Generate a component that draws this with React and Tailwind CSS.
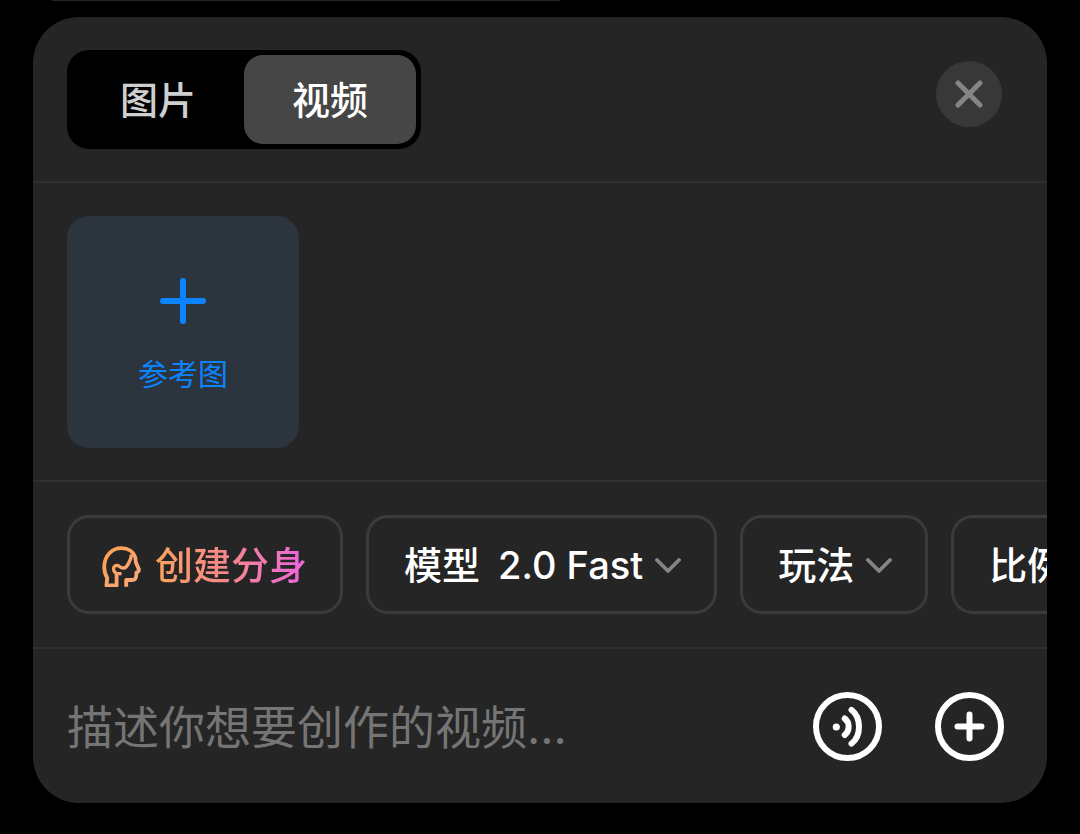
import React, { useState } from 'react';

const TABS = [
  { id: 'image', label: '图片' },
  { id: 'video', label: '视频' },
];

const AvatarIcon = () => (
  <svg width="42" height="42" viewBox="0 0 42 42" fill="none" stroke="url(#avatarStroke)" strokeWidth="3.8" strokeLinejoin="round" className="shrink-0" aria-hidden="true">
    <defs>
      <linearGradient id="avatarStroke" x1="0" y1="0" x2="1" y2="1">
        <stop offset="0" stopColor="#fba24e" />
        <stop offset="1" stopColor="#fba780" />
      </linearGradient>
    </defs>
    <path d="M15.6 28.4V40.4H5.4L6.2 33C4.2 29.8 3.2 26 3.2 21.5C3.6 10.5 10.8 3.2 20.5 3.2C27.2 3.2 32.4 6.6 34.2 12C34.8 14.2 34.4 16 35 17.8L37.6 23.6C38.2 25.4 37.6 26.8 35.4 27.6C35.6 32.6 34.4 35 30.8 35H25.2V41.8" />
    <path d="M20.6 28.6H15.6C12.8 26.8 11.6 24 13.2 21.6C14.8 19.8 17.2 20.2 18.8 21.8C21.2 23.8 24.6 23.4 26.2 20.6C27.6 17.6 30.6 15 30.4 9.4" strokeWidth="3.4" />
  </svg>
);

const Chevron = () => (
  <svg width="26" height="15" viewBox="0 0 26 15" fill="none" stroke="#858585" strokeWidth="3.8" strokeLinecap="round" strokeLinejoin="round" className="pointer-events-none shrink-0" aria-hidden="true">
    <path d="M2 2L13 13L24 2" />
  </svg>
);

const SelectChip = ({ name, label, options }) => (
  <label className="flex h-[99px] shrink-0 items-center rounded-[22px] border-3 border-[#3b3b3b] pl-[35px] pr-[33px] pt-0.5 text-[38px] font-medium text-white">
    {label && <span className="mr-[18px] whitespace-nowrap">{label}</span>}
    <select
      aria-label={name}
      className="mr-3 appearance-none bg-transparent font-medium outline-none field-sizing-content"
    >
      {options.map((option) => (
        <option key={option} className="bg-[#252525]">{option}</option>
      ))}
    </select>
    <Chevron />
  </label>
);

const App = () => {
  const [tab, setTab] = useState('video');
  const [prompt, setPrompt] = useState('');

  return (
    <div className="min-h-screen bg-black font-[Inter,'Noto_Sans_CJK_SC',sans-serif] text-white">
      {/* Edge of the feed above */}
      <div className="ml-[52px] h-px w-[47%] bg-[#262626]" />

      <main className="mx-[33px] mt-4 overflow-hidden rounded-[46px] bg-[#252525]">
        {/* Header */}
        <header className="flex items-start justify-between border-b-2 border-[#303030] pb-8 pl-[34px] pr-[45px] pt-[33px]">
          <div role="tablist" className="flex h-[99px] w-[354px] rounded-[22px] bg-black p-[5px]">
            {TABS.map(({ id, label }) => (
              <button
                key={id}
                role="tab"
                aria-selected={tab === id}
                onClick={() => setTab(id)}
                className={`flex-1 rounded-[19px] pt-0.5 text-[38px] font-medium ${tab === id ? 'bg-[#464646] text-white' : 'text-[#cfcfcf]'}`}
              >
                {label}
              </button>
            ))}
          </div>
          <button aria-label="关闭" className="mt-[11px] flex size-[66px] items-center justify-center rounded-full bg-[#383838]">
            <svg width="28" height="28" viewBox="0 0 28 28" stroke="#858585" strokeWidth="5" strokeLinecap="round" aria-hidden="true">
              <path d="M3 3L25 25M25 3L3 25" />
            </svg>
          </button>
        </header>

        {/* Reference images */}
        <section className="border-b-2 border-[#303030] pb-8 pl-[34px] pt-[33px]">
          <button className="flex size-[232px] flex-col items-center justify-center gap-7 rounded-[22px] bg-[#2c353e] pt-2.5 text-[#0a84ff]">
            <svg width="46" height="46" viewBox="0 0 46 46" stroke="currentColor" strokeWidth="6" strokeLinecap="round" aria-hidden="true">
              <path d="M23 3V43M3 23H43" />
            </svg>
            <span className="text-[30px] leading-[44px]">参考图</span>
          </button>
        </section>

        {/* Options */}
        <section className="flex gap-[23px] overflow-hidden border-b-2 border-[#303030] pb-[33px] pl-[34px] pt-[33px]">
          <button className="flex h-[99px] shrink-0 items-center gap-3 rounded-[22px] border-3 border-[#3b3b3b] pl-[31px] pr-[33px] pt-0.5 text-[38px] font-medium">
            <AvatarIcon />
            <span className="bg-linear-to-r from-[#fba45c] via-[#f5848c] to-[#ee62e0] bg-clip-text text-transparent">创建分身</span>
          </button>
          <SelectChip name="模型" label="模型" options={['2.0 Fast', '2.0']} />
          <SelectChip name="玩法" options={['玩法']} />
          <SelectChip name="比例" options={['比例']} />
        </section>

        {/* Prompt */}
        <footer className="flex h-[154px] items-center gap-[53px] pl-[34px] pr-[43px]">
          <input
            value={prompt}
            onChange={(e) => setPrompt(e.target.value)}
            aria-label="描述"
            placeholder="描述你想要创作的视频..."
            className="min-w-0 flex-1 bg-transparent pt-0.5 text-[46px] outline-none placeholder:text-[#757575]"
          />
          <button aria-label="语音输入" className="shrink-0">
            <svg width="69" height="69" viewBox="0 0 69 69" fill="none" stroke="white" strokeWidth="6" strokeLinecap="round" aria-hidden="true">
              <circle cx="34.5" cy="34.5" r="31.5" />
              <circle cx="23.3" cy="35" r="3.6" fill="white" stroke="none" />
              <path d="M31.7 26.5C37 30.5 37 39 31.7 43" />
              <path d="M38.5 17.8C48.5 25.5 48.5 44 38.5 51.6" />
            </svg>
          </button>
          <button aria-label="添加" className="shrink-0">
            <svg width="69" height="69" viewBox="0 0 69 69" fill="none" stroke="white" strokeWidth="6" strokeLinecap="round" aria-hidden="true">
              <circle cx="34.5" cy="34.5" r="31.5" />
              <path d="M34.5 22.5V46.5M22.5 34.5H46.5" />
            </svg>
          </button>
        </footer>
      </main>
    </div>
  );
};

export default App;
